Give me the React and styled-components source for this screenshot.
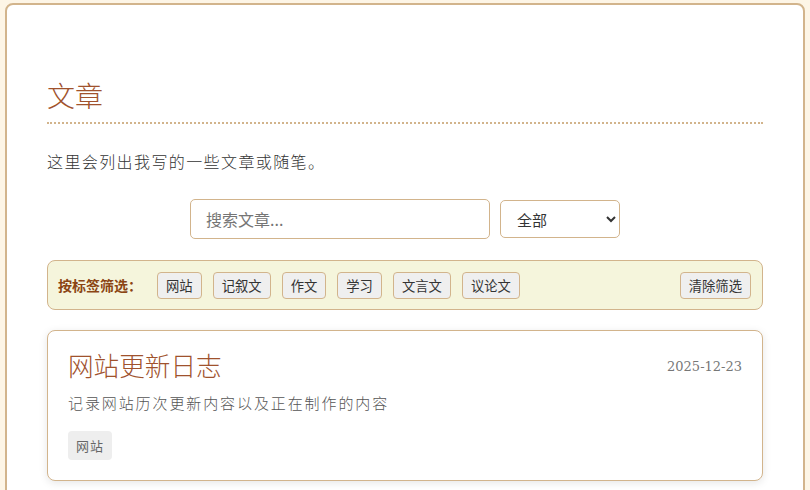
import React from 'react';
import styled, { createGlobalStyle } from 'styled-components';

const theme = {
  cream: '#fdf5e6',
  tan: '#d2b48c',
  sienna: '#a0522d',
  saddle: '#8b4513',
  beige: '#f5f5dc',
  text: '#333',
  muted: '#555',
  gray: '#777',
  chip: '#eee',
};

const cjk = `"Noto Sans CJK SC", "Noto Sans", sans-serif`;

const GlobalStyle = createGlobalStyle`
  html, body {
    margin: 0;
    padding: 0;
    background-color: ${theme.cream};
    font-family: ${cjk};
    color: ${theme.text};
  }
  * { box-sizing: border-box; }
`;

const Page = styled.div`
  padding: 3px 5px 0 5px;
  height: 490px;
  overflow: hidden;
`;

const Container = styled.main`
  width: 800px;
  min-height: 600px;
  background-color: #fff;
  border: 2px solid ${theme.tan};
  border-radius: 8px;
  padding: 70px 40px 0;
`;

const Heading = styled.h2`
  margin: 0;
  font-size: 28px;
  font-weight: 300;
  line-height: 40px;
  color: ${theme.sienna};
  padding-bottom: 7px;
  border-bottom: 2px dotted ${theme.tan};
`;

const Intro = styled.p`
  margin: 26px 0 0;
  font-size: 16px;
  font-weight: 300;
  letter-spacing: 1.4px;
  line-height: 23px;
  color: ${theme.text};
`;

const SearchRow = styled.div`
  display: flex;
  justify-content: center;
  align-items: center;
  gap: 10px;
  margin-top: 26px;
`;

const SearchInput = styled.input`
  width: 300px;
  height: 40px;
  padding: 0 15px;
  border: 1px solid ${theme.tan};
  border-radius: 5px;
  font-family: ${cjk};
  font-size: 16px;
  color: ${theme.text};
  outline: none;

  &::placeholder {
    color: #757575;
  }
`;

const Select = styled.select`
  width: 120px;
  height: 38px;
  padding: 0 12px;
  border: 1px solid ${theme.tan};
  border-radius: 5px;
  background-color: #fff;
  font-family: ${cjk};
  font-size: 15px;
  color: ${theme.text};
  outline: none;
`;

const FilterBar = styled.div`
  display: flex;
  align-items: center;
  gap: 11px;
  margin-top: 21px;
  height: 50px;
  padding: 0 11px 0 10px;
  background-color: ${theme.beige};
  border: 1px solid ${theme.tan};
  border-radius: 8px;
`;

const FilterLabel = styled.span`
  font-size: 14px;
  font-weight: 700;
  color: ${theme.saddle};
  margin-right: 4px;
`;

const TagButton = styled.button`
  height: 27px;
  padding: 0 8px;
  border: 1px solid ${theme.tan};
  border-radius: 4px;
  background-color: #efefef;
  font-family: ${cjk};
  font-size: 13.33px;
  line-height: 25px;
  color: ${theme.text};
  cursor: pointer;
  margin-left: ${(p) => (p.$pushRight ? 'auto' : '0')};
`;

const Card = styled.article`
  margin-top: 20px;
  padding: 18px 20px 20px;
  background-color: #fff;
  border: 1px solid ${theme.tan};
  border-radius: 8px;
  box-shadow: 0 2px 8px rgba(0, 0, 0, 0.1);
`;

const CardHeader = styled.div`
  display: flex;
  justify-content: space-between;
  align-items: center;
`;

const CardTitle = styled.h3`
  margin: 0;
  font-size: 25.6px;
  font-weight: 300;
  line-height: 31px;
  color: ${theme.sienna};
`;

const CardDate = styled.span`
  font-family: "DejaVu Serif", serif;
  font-variant-numeric: oldstyle-nums;
  font-size: 13px;
  color: ${theme.gray};
  margin-top: 4px;
`;

const CardText = styled.p`
  margin: 12px 0 0;
  font-size: 15px;
  font-weight: 300;
  letter-spacing: 1.9px;
  line-height: 22px;
  color: ${theme.muted};
`;

const CardTags = styled.div`
  display: flex;
  gap: 8px;
  margin-top: 17px;
`;

const Chip = styled.span`
  display: inline-block;
  padding: 5px 8px;
  border-radius: 4px;
  background-color: ${theme.chip};
  font-size: 13px;
  letter-spacing: 1px;
  line-height: 19px;
  color: #666;
`;

const tags = ['网站', '记叙文', '作文', '学习', '文言文', '议论文'];

const articles = [
  {
    title: '网站更新日志',
    date: '2025-12-23',
    summary: '记录网站历次更新内容以及正在制作的内容',
    tags: ['网站'],
  },
];

const App = () => {
  return (
    <>
      <GlobalStyle />
      <Page>
        <Container>
          <Heading>文章</Heading>
          <Intro>这里会列出我写的一些文章或随笔。</Intro>

          <SearchRow>
            <SearchInput placeholder="搜索文章..." />
            <Select defaultValue="all">
              <option value="all">全部</option>
            </Select>
          </SearchRow>

          <FilterBar>
            <FilterLabel>按标签筛选：</FilterLabel>
            {tags.map((t) => (
              <TagButton key={t}>{t}</TagButton>
            ))}
            <TagButton $pushRight>清除筛选</TagButton>
          </FilterBar>

          {articles.map((a) => (
            <Card key={a.title}>
              <CardHeader>
                <CardTitle>{a.title}</CardTitle>
                <CardDate>{a.date}</CardDate>
              </CardHeader>
              <CardText>{a.summary}</CardText>
              <CardTags>
                {a.tags.map((t) => (
                  <Chip key={t}>{t}</Chip>
                ))}
              </CardTags>
            </Card>
          ))}
        </Container>
      </Page>
    </>
  );
};

export default App;
